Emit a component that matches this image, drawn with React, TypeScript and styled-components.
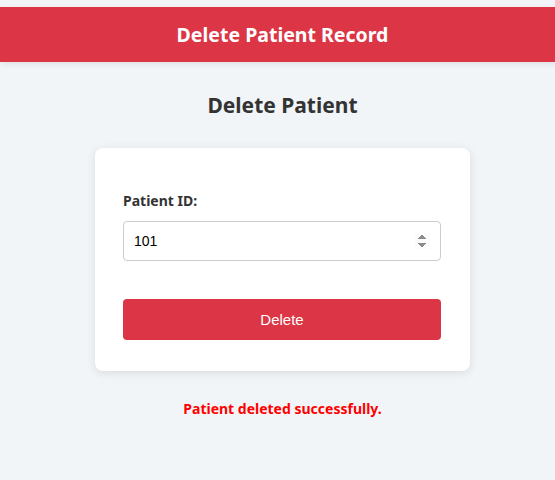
import React, { useState } from "react";
import styled, { createGlobalStyle } from "styled-components";

const Global = createGlobalStyle`
  html, body { margin: 0; padding: 0; background: #f2f5f8; overflow-x: hidden; }
  body { font-family: "Noto Sans", "Open Sans", sans-serif; }
`;

const Page = styled.div`
  width: 565px;
  padding-top: 7px;
  min-height: 473px;
  display: flex;
  flex-direction: column;
  align-items: center;
`;

const Header = styled.header`
  align-self: stretch;
  height: 55px;
  background: #dc3545;
  display: flex;
  align-items: center;
  justify-content: center;
  box-shadow: 0 2px 6px rgba(0, 0, 0, 0.08);
`;

const HeaderTitle = styled.h1`
  margin: 0;
  color: #ffffff;
  font-size: 19.5px;
  font-weight: 700;
`;

const Heading = styled.h2`
  margin: 29px 0 0;
  font-size: 21px;
  font-weight: 700;
  color: #333333;
  line-height: 28px;
`;

const Card = styled.form`
  margin-top: 29px;
  width: 375px;
  box-sizing: border-box;
  padding: 43px 29px 31px 28px;
  background: #ffffff;
  border-radius: 8px;
  box-shadow: 0 2px 10px rgba(0, 0, 0, 0.1);
  display: flex;
  flex-direction: column;
`;

const Label = styled.label`
  font-size: 14px;
  font-weight: 700;
  color: #333333;
  line-height: 19px;
`;

const Input = styled.input`
  margin-top: 11px;
  height: 40px;
  box-sizing: border-box;
  border: 1px solid #cccccc;
  border-radius: 4px;
  padding: 0 10px;
  font-family: "Liberation Sans", Arial, sans-serif;
  font-size: 14px;
  color: #000;
  outline: none;
`;

const Button = styled.button`
  margin-top: 38px;
  height: 41px;
  border: none;
  border-radius: 4px;
  background: #dc3545;
  color: #ffffff;
  font-family: "Liberation Sans", Arial, sans-serif;
  font-size: 15px;
  cursor: pointer;
`;

const Message = styled.p`
  margin: 28px 0 0;
  font-size: 14px;
  font-weight: 700;
  color: #ff0000;
  line-height: 19px;
`;

export default function App() {
  const [id, setId] = useState("101");
  return (
    <>
      <Global />
      <Page>
        <Header>
          <HeaderTitle>Delete Patient Record</HeaderTitle>
        </Header>
        <Heading>Delete Patient</Heading>
        <Card onSubmit={(e) => e.preventDefault()}>
          <Label htmlFor="pid">Patient ID:</Label>
          <Input
            id="pid"
            type="number"
            value={id}
            autoFocus
            onChange={(e) => setId(e.target.value)}
          />
          <Button type="submit">Delete</Button>
        </Card>
        <Message>Patient deleted successfully.</Message>
      </Page>
    </>
  );
}
